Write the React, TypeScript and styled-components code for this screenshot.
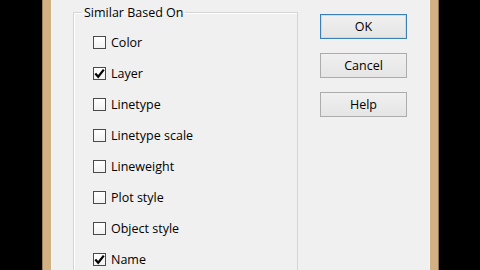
import React from "react";
import styled, { createGlobalStyle } from "styled-components";

const Global = createGlobalStyle`
  html, body {
    margin: 0;
    padding: 0;
    background: #000;
    width: 480px;
    height: 270px;
    overflow: hidden;
  }
  * { box-sizing: border-box; }
`;

const Screen = styled.div`
  display: flex;
  width: 480px;
  height: 270px;
  padding-left: 42px;
  background: #000;
  overflow: hidden;
`;

const Frame = styled.div`
  display: flex;
  width: 397px;
  height: 270px;
  background: #d3af84;
  border-left: 1px solid #9a7f5e;
  border-right: 1px solid #8a7256;
  padding: 0 8px;
`;

const Client = styled.div`
  flex: 1;
  display: flex;
  align-items: flex-start;
  overflow: hidden;
  background: #f0f0f0;
  border-left: 1px solid #fbf8f4;
  border-right: 1px solid #f7f4ef;
  padding: 0 22px 0 21px;
  font-family: "Open Sans", "Noto Sans", sans-serif;
  font-size: 12.5px;
  color: #000;
`;

const GroupBox = styled.fieldset`
  width: 225px;
  height: 272px;
  margin: 4px 0 0 0;
  padding: 0;
  border: 1px solid #d5d5d5;
  box-shadow: inset 1px 1px 0 #fff;
`;

const Legend = styled.legend`
  margin-left: 8px;
  padding: 0 2px;
  line-height: 17px;
  font-size: 12.5px;
`;

const List = styled.div`
  display: flex;
  flex-direction: column;
  padding: 6px 0 0 19px;
`;

const Row = styled.label`
  display: flex;
  align-items: center;
  height: 31px;
  gap: 5px;
`;

const Box = styled.span`
  display: flex;
  align-items: center;
  justify-content: center;
  width: 13px;
  height: 13px;
  border: 1px solid #4a4a4a;
  background: linear-gradient(#ffffff, #f2f2f2);
`;

const Buttons = styled.div`
  margin-left: auto;
  margin-top: 14px;
  display: flex;
  flex-direction: column;
  gap: 14px;
  width: 87px;
`;

const Button = styled.button<{ $default?: boolean }>`
  height: 25px;
  width: 87px;
  padding: 0;
  font-family: "Open Sans", "Noto Sans", sans-serif;
  font-size: 12.5px;
  color: #000;
  border: 1px solid ${(p) => (p.$default ? "#3c7fb1" : "#acacac")};
  box-shadow: ${(p) => (p.$default ? "inset 0 0 0 1px #bfe0f4" : "none")};
  background: linear-gradient(#f0f0f0, #e5e5e5);
  border-radius: 0;
`;

const Check = () => (
  <svg width="11" height="11" viewBox="0 0 11 11">
    <path d="M1.3 5.6 L4.2 8.8 L9.8 1.6" fill="none" stroke="#000" strokeWidth="2.2" />
  </svg>
);

const items: [string, boolean][] = [
  ["Color", false],
  ["Layer", true],
  ["Linetype", false],
  ["Linetype scale", false],
  ["Lineweight", false],
  ["Plot style", false],
  ["Object style", false],
  ["Name", true],
];

export default function App() {
  return (
    <>
      <Global />
      <Screen>
        <Frame>
          <Client>
            <GroupBox>
              <Legend>Similar Based On</Legend>
              <List>
                {items.map(([label, checked]) => (
                  <Row key={label}>
                    <Box>{checked && <Check />}</Box>
                    <span>{label}</span>
                  </Row>
                ))}
              </List>
            </GroupBox>
            <Buttons>
              <Button $default>OK</Button>
              <Button>Cancel</Button>
              <Button>Help</Button>
            </Buttons>
          </Client>
        </Frame>
      </Screen>
    </>
  );
}
